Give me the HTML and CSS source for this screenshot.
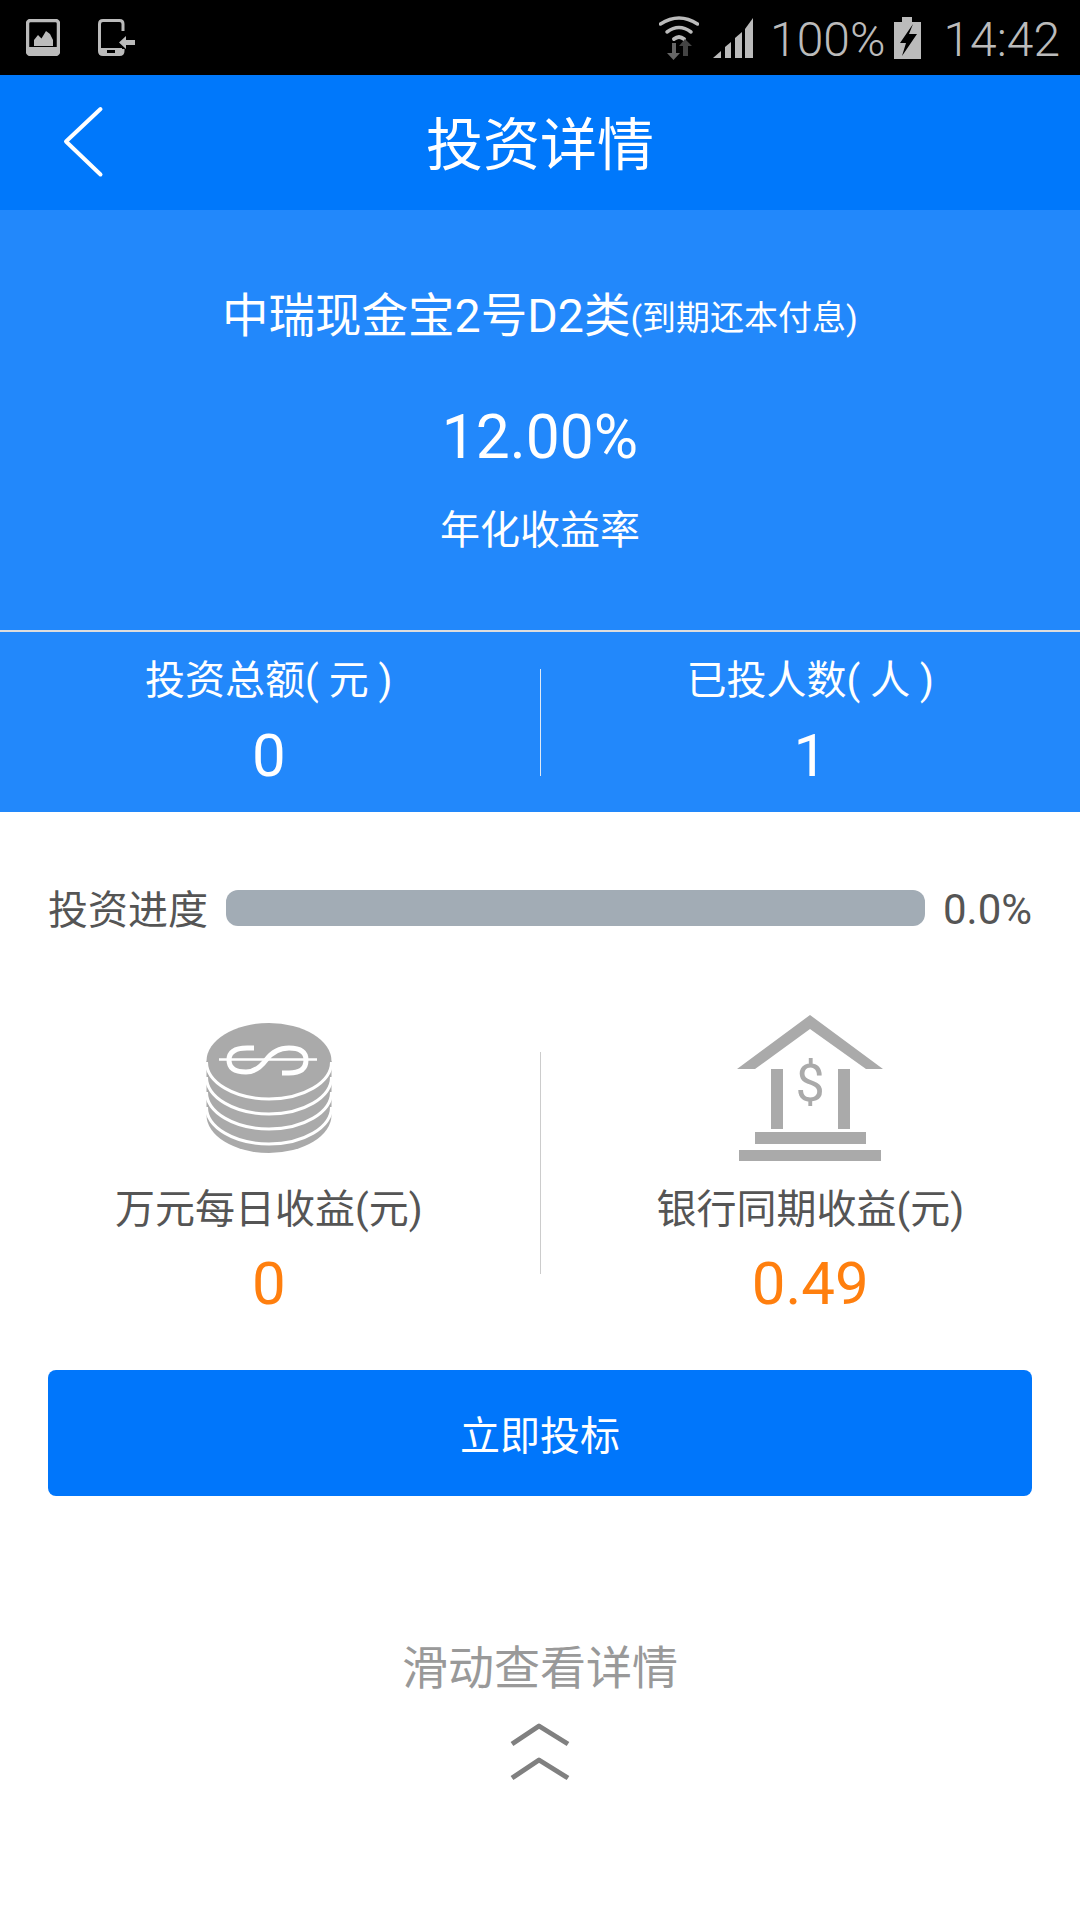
FILE: index.html
```html
<!DOCTYPE html>
<html lang="zh-CN">
<head>
<meta charset="utf-8">
<title>投资详情</title>
<link rel="stylesheet" href="styles.css">
</head>
<body>
<div class="page">
  <div class="status">
    <div class="status-left">
      <svg class="ic-image" viewBox="0 0 34 37"><rect x="1.500" y="1.500" width="31" height="34" rx="3" fill="none" stroke="#bbb" stroke-width="3.500"/><rect x="2" y="28" width="30" height="7" fill="#bbb"/><path d="M8 27V21L12 16L15.500 19.500L20 12L24 15L27 21V27Z" fill="#bbb"/></svg>
      <svg class="ic-phone" viewBox="0 0 37 37"><path d="M25 12V5Q25 1.500 21.500 1.500H5Q1.500 1.500 1.500 5V32Q1.500 35.500 5 35.500H21.500Q25 35.500 25 32V30" fill="none" stroke="#bbb" stroke-width="3"/><rect x="2" y="29" width="22" height="6" fill="#bbb"/><rect x="9" y="31" width="8" height="3" fill="#000"/><path d="M21 23.500L28 17V21H37V26H28V30Z" fill="#bbb"/></svg>
    </div>
    <div class="status-right">
      <svg class="ic-wifi" viewBox="0 0 40 45"><g fill="none" stroke="#bbb" stroke-linecap="round"><path d="M1.500 9Q20 -3 38.500 9" stroke-width="3.500"/><path d="M8 17Q20 8 32 17" stroke-width="3.500"/><path d="M15 24Q20 20 25 24" stroke-width="4"/></g><path d="M13 28V38H8L14.500 45L21 38H17V28Z" fill="#666"/><path d="M26 24L20 31H24V41H29V31H33Z" fill="#444"/></svg>
      <svg class="ic-signal" viewBox="0 0 40 40"><g fill="#bbb"><path d="M0 40L8 33V40Z"/><path d="M12 29L18 24V40H12Z"/><path d="M22 20L29 14V40H22Z"/><path d="M32 11L40 0V40H32Z"/></g></svg>
      <span class="status-text battery-text">100%</span>
      <svg class="ic-battery" viewBox="0 0 27 42"><path d="M8 0H18V5H27V42H0V5H8Z" fill="#bbb"/><path d="M19 7L6 26H12L8 39L23 17H15Z" fill="#000"/></svg>
      <span class="status-text time-text">14:42</span>
    </div>
  </div>

  <header class="nav">
    <div class="nav-side">
      <svg class="ic-back" viewBox="0 0 60 90"><path d="M48.500 11L14 43.500L48.500 76.500" fill="none" stroke="#fff" stroke-width="4" stroke-linecap="round" stroke-linejoin="round"/></svg>
    </div>
    <h1 class="nav-title">投资详情</h1>
    <div class="nav-side"></div>
  </header>

  <section class="hero">
    <div class="hero-name">中瑞现金宝2号D2类<span class="hero-note">(到期还本付息)</span></div>
    <div class="hero-rate">12.00%</div>
    <div class="hero-label">年化收益率</div>
    <div class="hero-rule"></div>
    <div class="stats">
      <div class="stat stat-left">
        <div class="stat-label">投资总额( 元 )</div>
        <div class="stat-value">0</div>
      </div>
      <div class="stat-divider"></div>
      <div class="stat">
        <div class="stat-label">已投人数( 人 )</div>
        <div class="stat-value">1</div>
      </div>
    </div>
  </section>

  <div class="progress">
    <span class="progress-label">投资进度</span>
    <div class="progress-bar"></div>
    <span class="progress-value">0.0%</span>
  </div>

  <section class="metrics">
    <div class="metric metric-left">
      <svg class="metric-icon" viewBox="0 0 200 170">
        <g fill="#aaa">
          <ellipse cx="100" cy="115" rx="62.500" ry="38"/>
          <rect x="37.500" y="61" width="125" height="54"/>
          <ellipse cx="100" cy="61" rx="62.500" ry="38"/>
        </g>
        <g fill="none" stroke="#fff" stroke-width="3">
          <path d="M37.500 62A62.500 37 0 0 0 162.500 62"/>
          <path d="M37.500 77A62.500 37 0 0 0 162.500 77"/>
          <path d="M37.500 92A62.500 37 0 0 0 162.500 92"/>
          <path d="M37.500 107A62.500 37 0 0 0 162.500 107"/>
        </g>
        <g fill="none" stroke="#fff">
          <path d="M50 59.500H148" stroke-width="2.500"/>
          <path d="M85 48H78Q60 48 60 60Q60 72 77 72Q88 72 97 60Q106 48 120 48Q137 48 137 60Q137 73 120 73H113" stroke-width="5"/>
        </g>
      </svg>
      <div class="metric-label">万元每日收益(元)</div>
      <div class="metric-value">0</div>
    </div>
    <div class="metric-divider"></div>
    <div class="metric">
      <svg class="metric-icon" viewBox="0 0 200 170">
        <g fill="#aaa">
          <path d="M100 15L173 69H156L100 29L45 69H27Z"/>
          <rect x="61" y="69" width="12" height="60"/>
          <rect x="128" y="69" width="12" height="60"/>
          <rect x="45" y="132" width="111" height="12"/>
          <rect x="29" y="150" width="142" height="11"/>
          <text class="bank-dollar" x="100" y="101" text-anchor="middle">$</text>
        </g>
      </svg>
      <div class="metric-label">银行同期收益(元)</div>
      <div class="metric-value">0.49</div>
    </div>
  </section>

  <button class="cta" type="button">立即投标</button>

  <div class="hint">滑动查看详情</div>
  <svg class="hint-arrows" viewBox="0 0 120 100">
    <g fill="none" stroke="#808080" stroke-width="5" stroke-linejoin="round">
      <path d="M32 44L59 26L88 44"/>
      <path d="M32 78L59 60L88 78"/>
    </g>
  </svg>
</div>
</body>
</html>
```

FILE: styles.css
```css
* { box-sizing: border-box; }
html, body { margin: 0; padding: 0; background: #fff; }
.page {
  width: 1080px;
  height: 1920px;
  overflow: hidden;
  background: #fff;
  font-family: Roboto, "Noto Sans CJK SC", sans-serif;
  color: #555;
  display: flex;
  flex-direction: column;
}

/* status bar */
.status {
  height: 75px;
  background: #000;
  display: flex;
  justify-content: space-between;
  align-items: center;
  padding: 0 20px 0 26px;
}
.status-left, .status-right { display: flex; align-items: center; }
.ic-image { width: 34px; height: 37px; }
.ic-phone { width: 37px; height: 37px; margin-left: 38px; }
.ic-wifi { width: 40px; height: 45px; }
.ic-signal { width: 40px; height: 40px; margin-left: 14px; }
.ic-battery { width: 27px; height: 42px; margin-left: 9px; }
.status-text { font-size: 48px; font-weight: 300; color: #bbb; line-height: 75px; padding-top: 4px; }
.battery-text { margin-left: 17px; }
.time-text { margin-left: 22px; }

/* nav */
.nav {
  height: 135px;
  background: #0078fb;
  display: grid;
  grid-template-columns: 1fr auto 1fr;
  align-items: center;
  color: #fff;
}
.nav-side { display: flex; align-items: center; }
.ic-back { width: 60px; height: 90px; margin-left: 52px; }
.nav-title { margin: 6px 0 0; font-size: 57px; font-weight: 400; line-height: 80px; }

/* hero */
.hero { background: #2288fb; color: #fff; padding-top: 76px; text-align: center; height: 602px; }
.hero-name { font-size: 46.500px; line-height: 60px; height: 60px; }
.hero-note { font-size: 34px; vertical-align: 2px; line-height: 1; }
.hero-rate { font-size: 60.500px; line-height: 80px; margin-top: 52px; }
.hero-label { font-size: 40px; line-height: 60px; margin-top: 23px; }
.hero-rule { height: 2px; background: #ddd; margin-top: 69px; }
.stats { display: grid; grid-template-columns: 1fr 1px 1fr; padding-top: 25px; }
.stat-left { padding-right: 2px; }
.stat-label { font-size: 40px; line-height: 48px; }
.stat-value { font-size: 60px; line-height: 70px; margin-top: 16px; }
.stat-divider { background: #dfe9f5; height: 107px; margin-top: 12px; }

/* progress */
.progress {
  display: flex;
  align-items: center;
  height: 36px;
  margin: 78px 48px 0;
  font-size: 40px;
  color: #555;
}
.progress-label { white-space: nowrap; padding-bottom: 2px; }
.progress-bar { flex: 1; height: 36px; background: #a2acb5; border-radius: 12px; margin: 0 18px; }
.progress-value { font-size: 42px; padding-top: 3px; }

/* metrics */
.metrics { display: grid; grid-template-columns: 1fr 1px 1fr; margin-top: 74px; text-align: center; }
.metric { display: flex; flex-direction: column; align-items: center; }
.metric-left { padding-right: 2px; }
.metric-icon { width: 200px; height: 170px; display: block; }
.bank-dollar { font-family: Roboto, sans-serif; font-size: 52px; font-weight: 400; }
.metric-label { font-size: 40px; line-height: 60px; margin-top: 10px; }
.metric-value { font-size: 60px; line-height: 70px; margin-top: 9px; color: #ff7f0e; }
.metric-divider { background: #ccc; height: 222px; margin-top: 52px; }

/* cta */
.cta {
  display: block;
  margin: 51px 48px 0;
  height: 126px;
  border: 0;
  border-radius: 8px;
  background: #0076fb;
  color: #fff;
  font: inherit;
  font-size: 40px;
}

/* hint */
.hint { font-size: 46px; line-height: 60px; text-align: center; color: #999; margin-top: 142px; }
.hint-arrows { width: 120px; height: 100px; display: block; margin: 2px auto 0; }
```
